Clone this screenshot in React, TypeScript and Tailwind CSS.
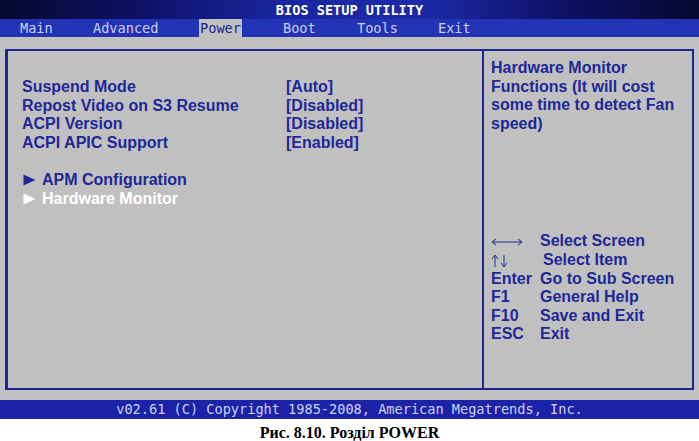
import React from "react";

const mono = { fontFamily: '"DejaVu Sans Mono", "Liberation Mono", monospace' };
const sans = { fontFamily: '"Liberation Sans", Arial, sans-serif' };
const serif = { fontFamily: '"Liberation Serif", "Times New Roman", serif' };

const settings = [
  ["Suspend Mode", "[Auto]"],
  ["Repost Video on S3 Resume", "[Disabled]"],
  ["ACPI Version", "[Disabled]"],
  ["ACPI APIC Support", "[Enabled]"],
];

function Tri() {
  return (
    <svg width="13" height="12" viewBox="0 0 13 12" className="mt-[3px]">
      <polygon points="0.5,0.5 12.5,6 0.5,11.5" fill="currentColor" />
    </svg>
  );
}

function LeftRight() {
  return (
    <svg width="32" height="18" viewBox="0 0 32 18">
      <line x1="1" y1="10" x2="31" y2="10" stroke="#1e2896" strokeWidth="1" />
      <polyline points="5,7 1,10 5,13" fill="none" stroke="#1e2896" strokeWidth="1" />
      <polyline points="27,7 31,10 27,13" fill="none" stroke="#1e2896" strokeWidth="1" />
    </svg>
  );
}

function UpDown() {
  return (
    <svg width="18" height="18" viewBox="0 0 18 18">
      <line x1="4" y1="5" x2="4" y2="16" stroke="#1e2896" strokeWidth="1" />
      <polyline points="1,8 4,4 7,8" fill="none" stroke="#1e2896" strokeWidth="1" />
      <line x1="13" y1="4" x2="13" y2="15" stroke="#1e2896" strokeWidth="1" />
      <polyline points="10,12 13,16 16,12" fill="none" stroke="#1e2896" strokeWidth="1" />
    </svg>
  );
}

export default function App() {
  return (
    <div className="w-[699px] h-[441px] bg-white flex flex-col overflow-hidden">
      {/* title bar */}
      <div
        className="h-[19px] shrink-0 flex items-center justify-center text-white text-[13.6px] font-bold bg-[linear-gradient(90deg,#07082e_0%,#0c1060_18%,#1a25a0_40%,#1d2aa8_60%,#0c1060_82%,#07082e_100%)]"
        style={mono}
      >
        <span className="pt-[1px]">BIOS SETUP UTILITY</span>
      </div>
      {/* menu bar */}
      <div className="h-[18px] shrink-0 bg-[#2233b6] flex items-stretch text-[13.6px] text-[#cdd1ee]" style={mono}>
        <div className="w-[20px]" />
        <span className="w-[73px] flex items-center">Main</span>
        <span className="w-[106px] flex items-center">Advanced</span>
        <span className="w-[43px] bg-[#c0c0c0] text-[#1c2590] flex items-center justify-center">Power</span>
        <span className="w-[41px]" />
        <span className="w-[74px] flex items-center">Boot</span>
        <span className="w-[81px] flex items-center">Tools</span>
        <span className="flex items-center">Exit</span>
      </div>
      {/* main gray area */}
      <div className="h-[363px] shrink-0 bg-[#c0c0c0] pt-[12px] pl-[5px] pr-[5px] pb-[10px] flex">
        <div className="flex-1 flex border-2 border-l-[3px] border-[#1e2590]">
          {/* left pane */}
          <div className="w-[476px] border-r-2 border-[#1e2590] pl-[14px] pt-[27px] text-[16px] font-bold text-[#1e2896] leading-[18.6px]" style={sans}>
            {settings.map(([k, v]) => (
              <div key={k} className="flex">
                <span className="w-[264px]">{k}</span>
                <span>{v}</span>
              </div>
            ))}
            <div className="h-[18.6px]" />
            <div className="flex pl-[1px]">
              <span className="w-[19px]"><Tri /></span>
              <span>APM Configuration</span>
            </div>
            <div className="flex pl-[1px] text-white">
              <span className="w-[19px]"><Tri /></span>
              <span>Hardware Monitor</span>
            </div>
          </div>
          {/* right pane */}
          <div className="flex-1 pl-[7px] pt-[8px] text-[16px] font-bold text-[#1e2896] leading-[18.6px] flex flex-col" style={sans}>
            <div>
              Hardware Monitor
              <br />
              Functions (It will cost
              <br />
              some time to detect Fan
              <br />
              speed)
            </div>
            <div className="mt-[99px]">
              <div className="flex h-[18.6px]">
                <span className="w-[49px]"><LeftRight /></span>
                <span>Select Screen</span>
              </div>
              <div className="flex h-[18.6px]">
                <span className="w-[52px]"><UpDown /></span>
                <span>Select Item</span>
              </div>
              {[
                ["Enter", "Go to Sub Screen"],
                ["F1", "General Help"],
                ["F10", "Save and Exit"],
                ["ESC", "Exit"],
              ].map(([k, d]) => (
                <div key={k} className="flex">
                  <span className="w-[49px]">{k}</span>
                  <span>{d}</span>
                </div>
              ))}
            </div>
          </div>
        </div>
      </div>
      {/* footer */}
      <div className="h-[19px] shrink-0 bg-[#1d23a9] flex items-center justify-center text-[13.6px] text-[#cdd1ee]" style={mono}>
        v02.61 (C) Copyright 1985-2008, American Megatrends, Inc.
      </div>
      {/* caption */}
      <div className="h-[22px] shrink-0 flex items-center justify-center text-[16px] leading-[18px] font-bold text-black pt-[6px]" style={serif}>
        Рис. 8.10. Розділ POWER
      </div>
    </div>
  );
}
